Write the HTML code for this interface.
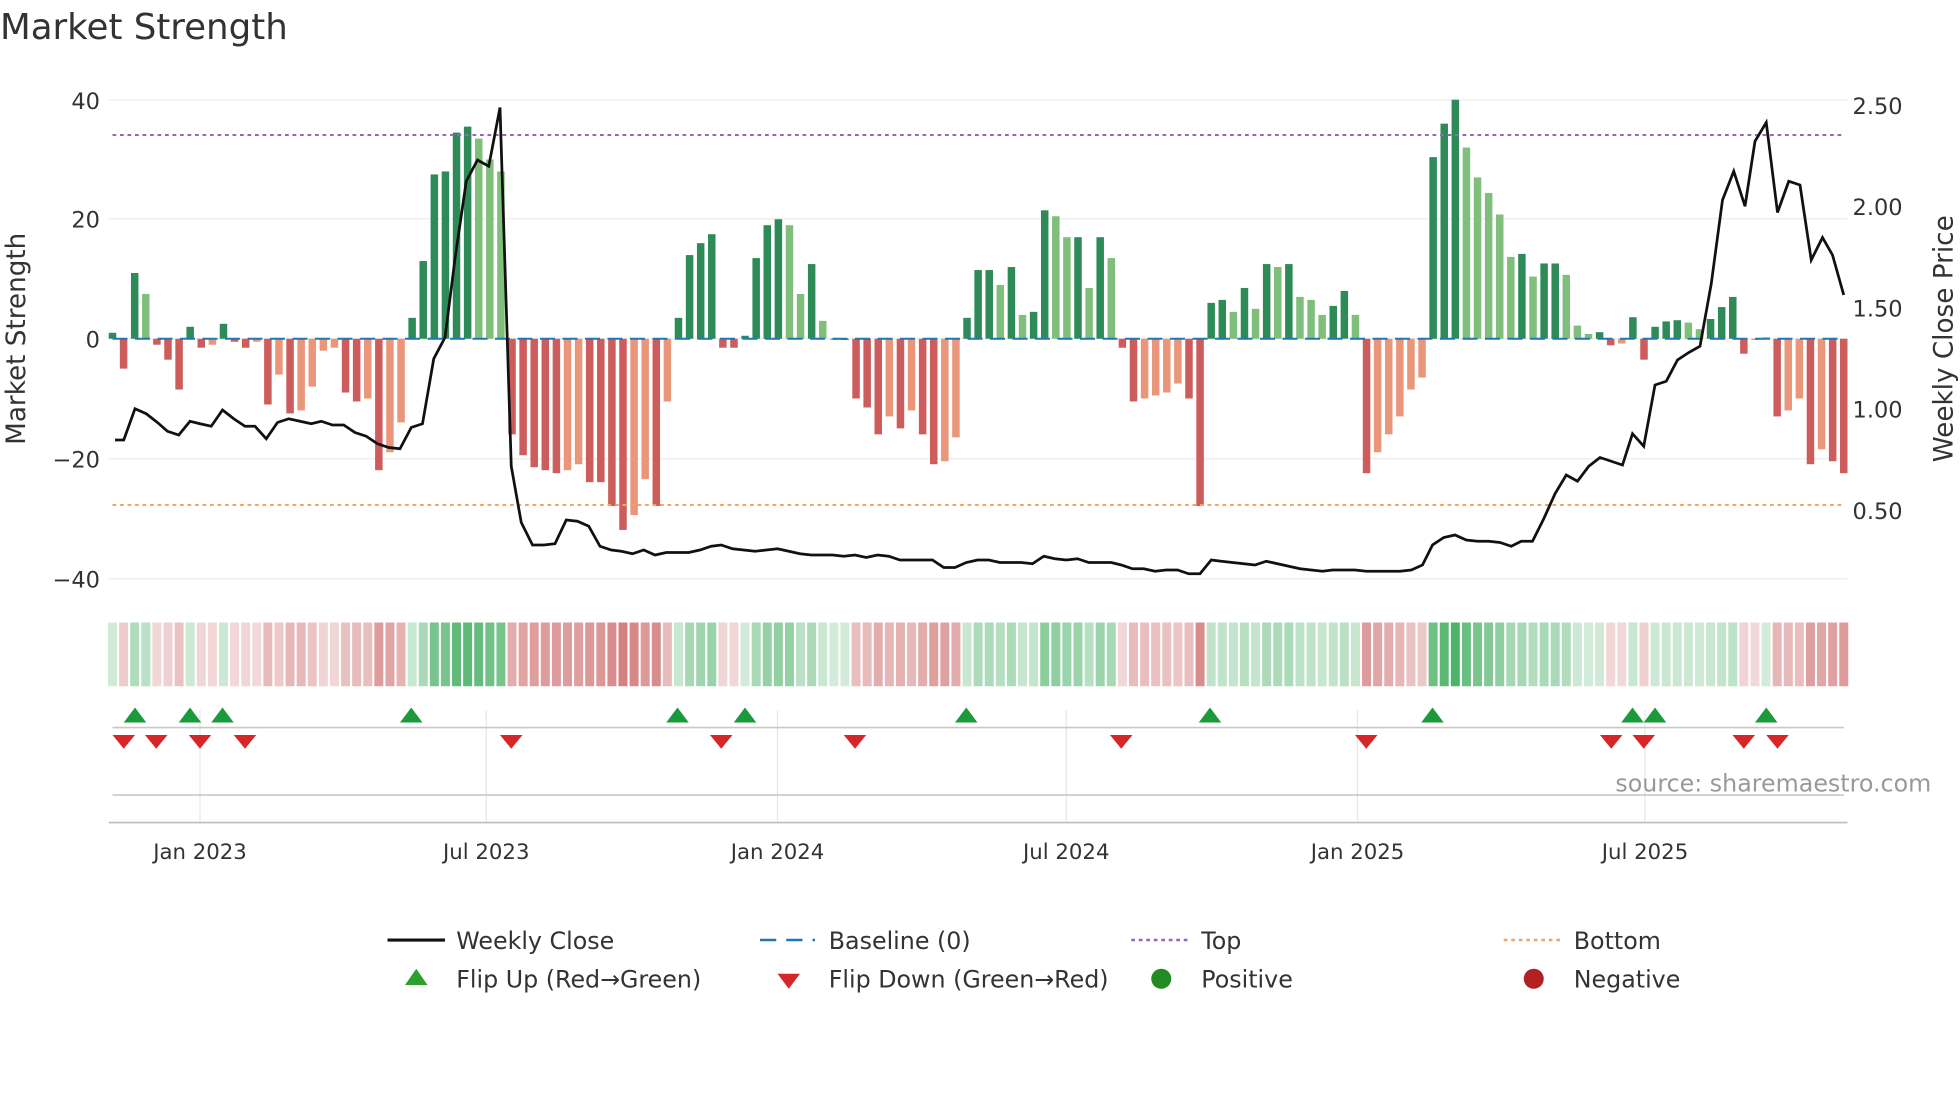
<!DOCTYPE html>
<html><head><meta charset="utf-8"><style>
html,body{margin:0;padding:0;background:#fff;}
svg{display:block;font-family:"DejaVu Sans","Liberation Sans",sans-serif;}
</style></head><body>
<svg id="s" width="1960" height="1102" viewBox="0 0 1568 881.6" xmlns="http://www.w3.org/2000/svg">
<rect width="1568" height="882" fill="#fff"/>
<text x="0" y="31" font-size="28.5" fill="#333">Market Strength</text>
<g stroke="#ececec" stroke-width="1">
<line x1="87" x2="1478" y1="80" y2="80"/><line x1="87" x2="1478" y1="175" y2="175"/><line x1="87" x2="1478" y1="271" y2="271"/><line x1="87" x2="1478" y1="367" y2="367"/><line x1="87" x2="1478" y1="463" y2="463"/>
</g>
<g font-size="18" fill="#333" text-anchor="end">
<text x="80" y="87">40</text><text x="80" y="182">20</text><text x="80" y="278">0</text><text x="80" y="374">−20</text><text x="80" y="470">−40</text>
</g>
<g font-size="18" fill="#333">
<text x="1482" y="91">2.50</text><text x="1482" y="172">2.00</text><text x="1482" y="253">1.50</text><text x="1482" y="334">1.00</text><text x="1482" y="415">0.50</text>
</g>
<text transform="translate(20,271) rotate(-90)" font-size="21" fill="#333" text-anchor="middle">Market Strength</text>
<text transform="translate(1562,271) rotate(-90)" font-size="21" fill="#333" text-anchor="middle">Weekly Close Price</text>
<g id="bars"></g>
<line x1="90" x2="1475" y1="108" y2="108" stroke="#9467bd" stroke-width="1.6" stroke-dasharray="3,3"/>
<line x1="90" x2="1475" y1="404" y2="404" stroke="#f4a460" stroke-width="1.6" stroke-dasharray="3,3"/>
<line x1="90" x2="1475" y1="271" y2="271" stroke="#1f77b4" stroke-width="1.6" stroke-dasharray="12,6"/>
<polyline id="price" fill="none" stroke="#111" stroke-width="2.2"/>
<g id="strip"></g>
<g stroke="#e6e6e6" stroke-width="1">
<line x1="160" x2="160" y1="568" y2="658"/><line x1="389" x2="389" y1="568" y2="658"/><line x1="622" x2="622" y1="568" y2="658"/><line x1="853" x2="853" y1="568" y2="658"/><line x1="1086" x2="1086" y1="568" y2="658"/><line x1="1316" x2="1316" y1="568" y2="658"/>
</g>
<line x1="90" x2="1475" y1="582" y2="582" stroke="#c8c8c8" stroke-width="1.3"/>
<line x1="90" x2="1475" y1="636" y2="636" stroke="#c8c8c8" stroke-width="1.3"/>
<line x1="87" x2="1478" y1="658" y2="658" stroke="#bbb" stroke-width="1.3"/>
<g id="marks"></g>
<text x="1545" y="633" font-size="19" fill="#999" text-anchor="end">source: sharemaestro.com</text>
<g font-size="17" fill="#333" text-anchor="middle">
<text x="160" y="687">Jan 2023</text><text x="389" y="687">Jul 2023</text><text x="622" y="687">Jan 2024</text><text x="853" y="687">Jul 2024</text><text x="1086" y="687">Jan 2025</text><text x="1316" y="687">Jul 2025</text>
</g>
<g font-size="19" fill="#333">
<line x1="310" x2="356" y1="752" y2="752" stroke="#111" stroke-width="2.5"/><text x="365" y="759">Weekly Close</text>
<line x1="608" x2="652" y1="752" y2="752" stroke="#1f77b4" stroke-width="2" stroke-dasharray="13,8"/><text x="663" y="759">Baseline (0)</text>
<line x1="905" x2="950" y1="752" y2="752" stroke="#9467bd" stroke-width="2" stroke-dasharray="3,3"/><text x="961" y="759">Top</text>
<line x1="1203" x2="1248" y1="752" y2="752" stroke="#f4a460" stroke-width="2" stroke-dasharray="3,3"/><text x="1259" y="759">Bottom</text>
<polygon points="324,788 342,788 333,775" fill="#2ca02c"/><text x="365" y="790">Flip Up (Red→Green)</text>
<polygon points="622,779 640,779 631,791" fill="#d62728"/><text x="663" y="790">Flip Down (Green→Red)</text>
<circle cx="929" cy="783" r="8" fill="#228b22"/><text x="961" y="790">Positive</text>
<circle cx="1227" cy="783" r="8" fill="#b22222"/><text x="1259" y="790">Negative</text>
</g>
</svg>
<script>
var v=[1,-5,11,7.5,-1,-3.5,-8.5,2,-1.5,-1,2.5,-0.5,-1.5,-0.5,-11,-6,-12.5,-12,-8,-2,-1.5,-9,-10.5,-10,-22,-19,-14,3.5,13,27.5,28,34.5,35.5,33.5,30,28,-16,-19.5,-21.5,-22,-22.5,-22,-21,-24,-24,-28,-32,-29.5,-23.5,-28,-10.5,3.5,14,16,17.5,-1.5,-1.5,0.5,13.5,19,20,19,7.5,12.5,3,0,0,-10,-11.5,-16,-13,-15,-12,-16,-21,-20.5,-16.5,3.5,11.5,11.5,9,12,4,4.5,21.5,20.5,17,17,8.5,17,13.5,-1.5,-10.5,-10,-9.5,-9,-7.5,-10,-28,6,6.5,4.5,8.5,5,12.5,12,12.5,7,6.5,4,5.5,8,4,-22.5,-19,-16,-13,-8.5,-6.5,
30.4,36,40,32,27,24.4,20.8,13.7,14.2,10.4,12.6,12.6,10.7,2.2,0.8,1.1,-1.1,-0.8,3.6,-3.5,2,2.9,3.1,2.7,1.6,3.3,5.3,7,-2.5,-0.2,0.2,-13,-12,-10,-21,-18.5,-20.5,-22.5];
var ns="http://www.w3.org/2000/svg";
function el(t,a,p){var e=document.createElementNS(ns,t);for(var k in a)e.setAttribute(k,a[k]);document.getElementById(p).appendChild(e);}
var n=v.length, step=(1475-90)/(n-1), x0=90;
for(var i=0;i<n;i++){var x=x0+i*step,y=v[i],p=i?v[i-1]:0,h=Math.abs(y)*4.78,c;
if(y>=0)c=(y>=p)?"#2e8b57":"#7fbf7b";else c=(y<=p)?"#cd5c5c":"#e9967a";
el("rect",{x:x-3,y:y>=0?271-h:271,width:6,height:Math.max(h,1),fill:c},"bars");
var a=0.25+0.75*Math.min(Math.abs(y),40)/40;
el("rect",{x:x-3.6,y:498,width:7.2,height:51,fill:y>=0?"rgb(60,170,90)":"rgb(200,90,90)","fill-opacity":a*0.9},"strip");}
var pr="92,352 99,352 108,327 117,331 126,338 134,345 143,348 152,337 160,339 169,341 178,328 187,335 196,341 204,341 213,351 222,338 231,335 240,337 249,339 257,337 266,340 275,340 284,346 293,349 302,355 311,358 320,359 329,342 338,339 347,287 356,270 364,207 373,145 382,128 391,133 400,86 409,373 417,418 426,436 435,436 444,435 453,416 462,417 471,421 480,437 489,440 497,441 506,443 515,440 524,444 533,442 542,442 551,442 560,440 569,437 577,436 586,439 595,440 604,441 613,440 622,439 631,441 640,443 649,444 657,444 666,444 675,445 684,444 693,446 702,444 711,445 720,448 729,448 737,448 746,448 755,454 764,454 773,450 782,448 791,448 800,450 808,450 817,450 826,451 835,445 844,447 853,448 862,447 871,450 880,450 889,450 897,452 906,455 915,455 924,457 933,456 942,456 951,459 960,459 969,448 977,449 986,450 995,451 1004,452 1013,449 1022,451 1031,453 1040,455 1049,456 1058,457 1066,456 1075,456 1084,456 1093,457 1102,457 1111,457 1120,457 1129,456 1138,452 1146,436 1155,430 1164,428 1173,432 1182,433 1191,433 1200,434 1209,437 1217,433 1226,433 1235,415 1244,395 1253,380 1262,385 1271,373 1280,366 1289,369 1298,372 1306,347 1315,357 1324,308 1333,305 1342,288 1351,282 1360,277 1369,227 1378,160 1387,137 1396,165 1404,113 1413,98 1422,170 1431,145 1440,148 1449,208 1458,190 1466,204 1475,236";
document.getElementById("price").setAttribute("points",pr);
[108,152,178,329,542,596,773,968,1146,1306,1324,1413].forEach(function(x){el("polygon",{points:(x-9)+",578 "+(x+9)+",578 "+x+",566",fill:"#1a9a3a"},"marks");});
[99,125,160,196,409,577,684,897,1093,1289,1315,1395,1422].forEach(function(x){el("polygon",{points:(x-9)+",588 "+(x+9)+",588 "+x+",599",fill:"#d62728"},"marks");});
</script>
</body></html>
